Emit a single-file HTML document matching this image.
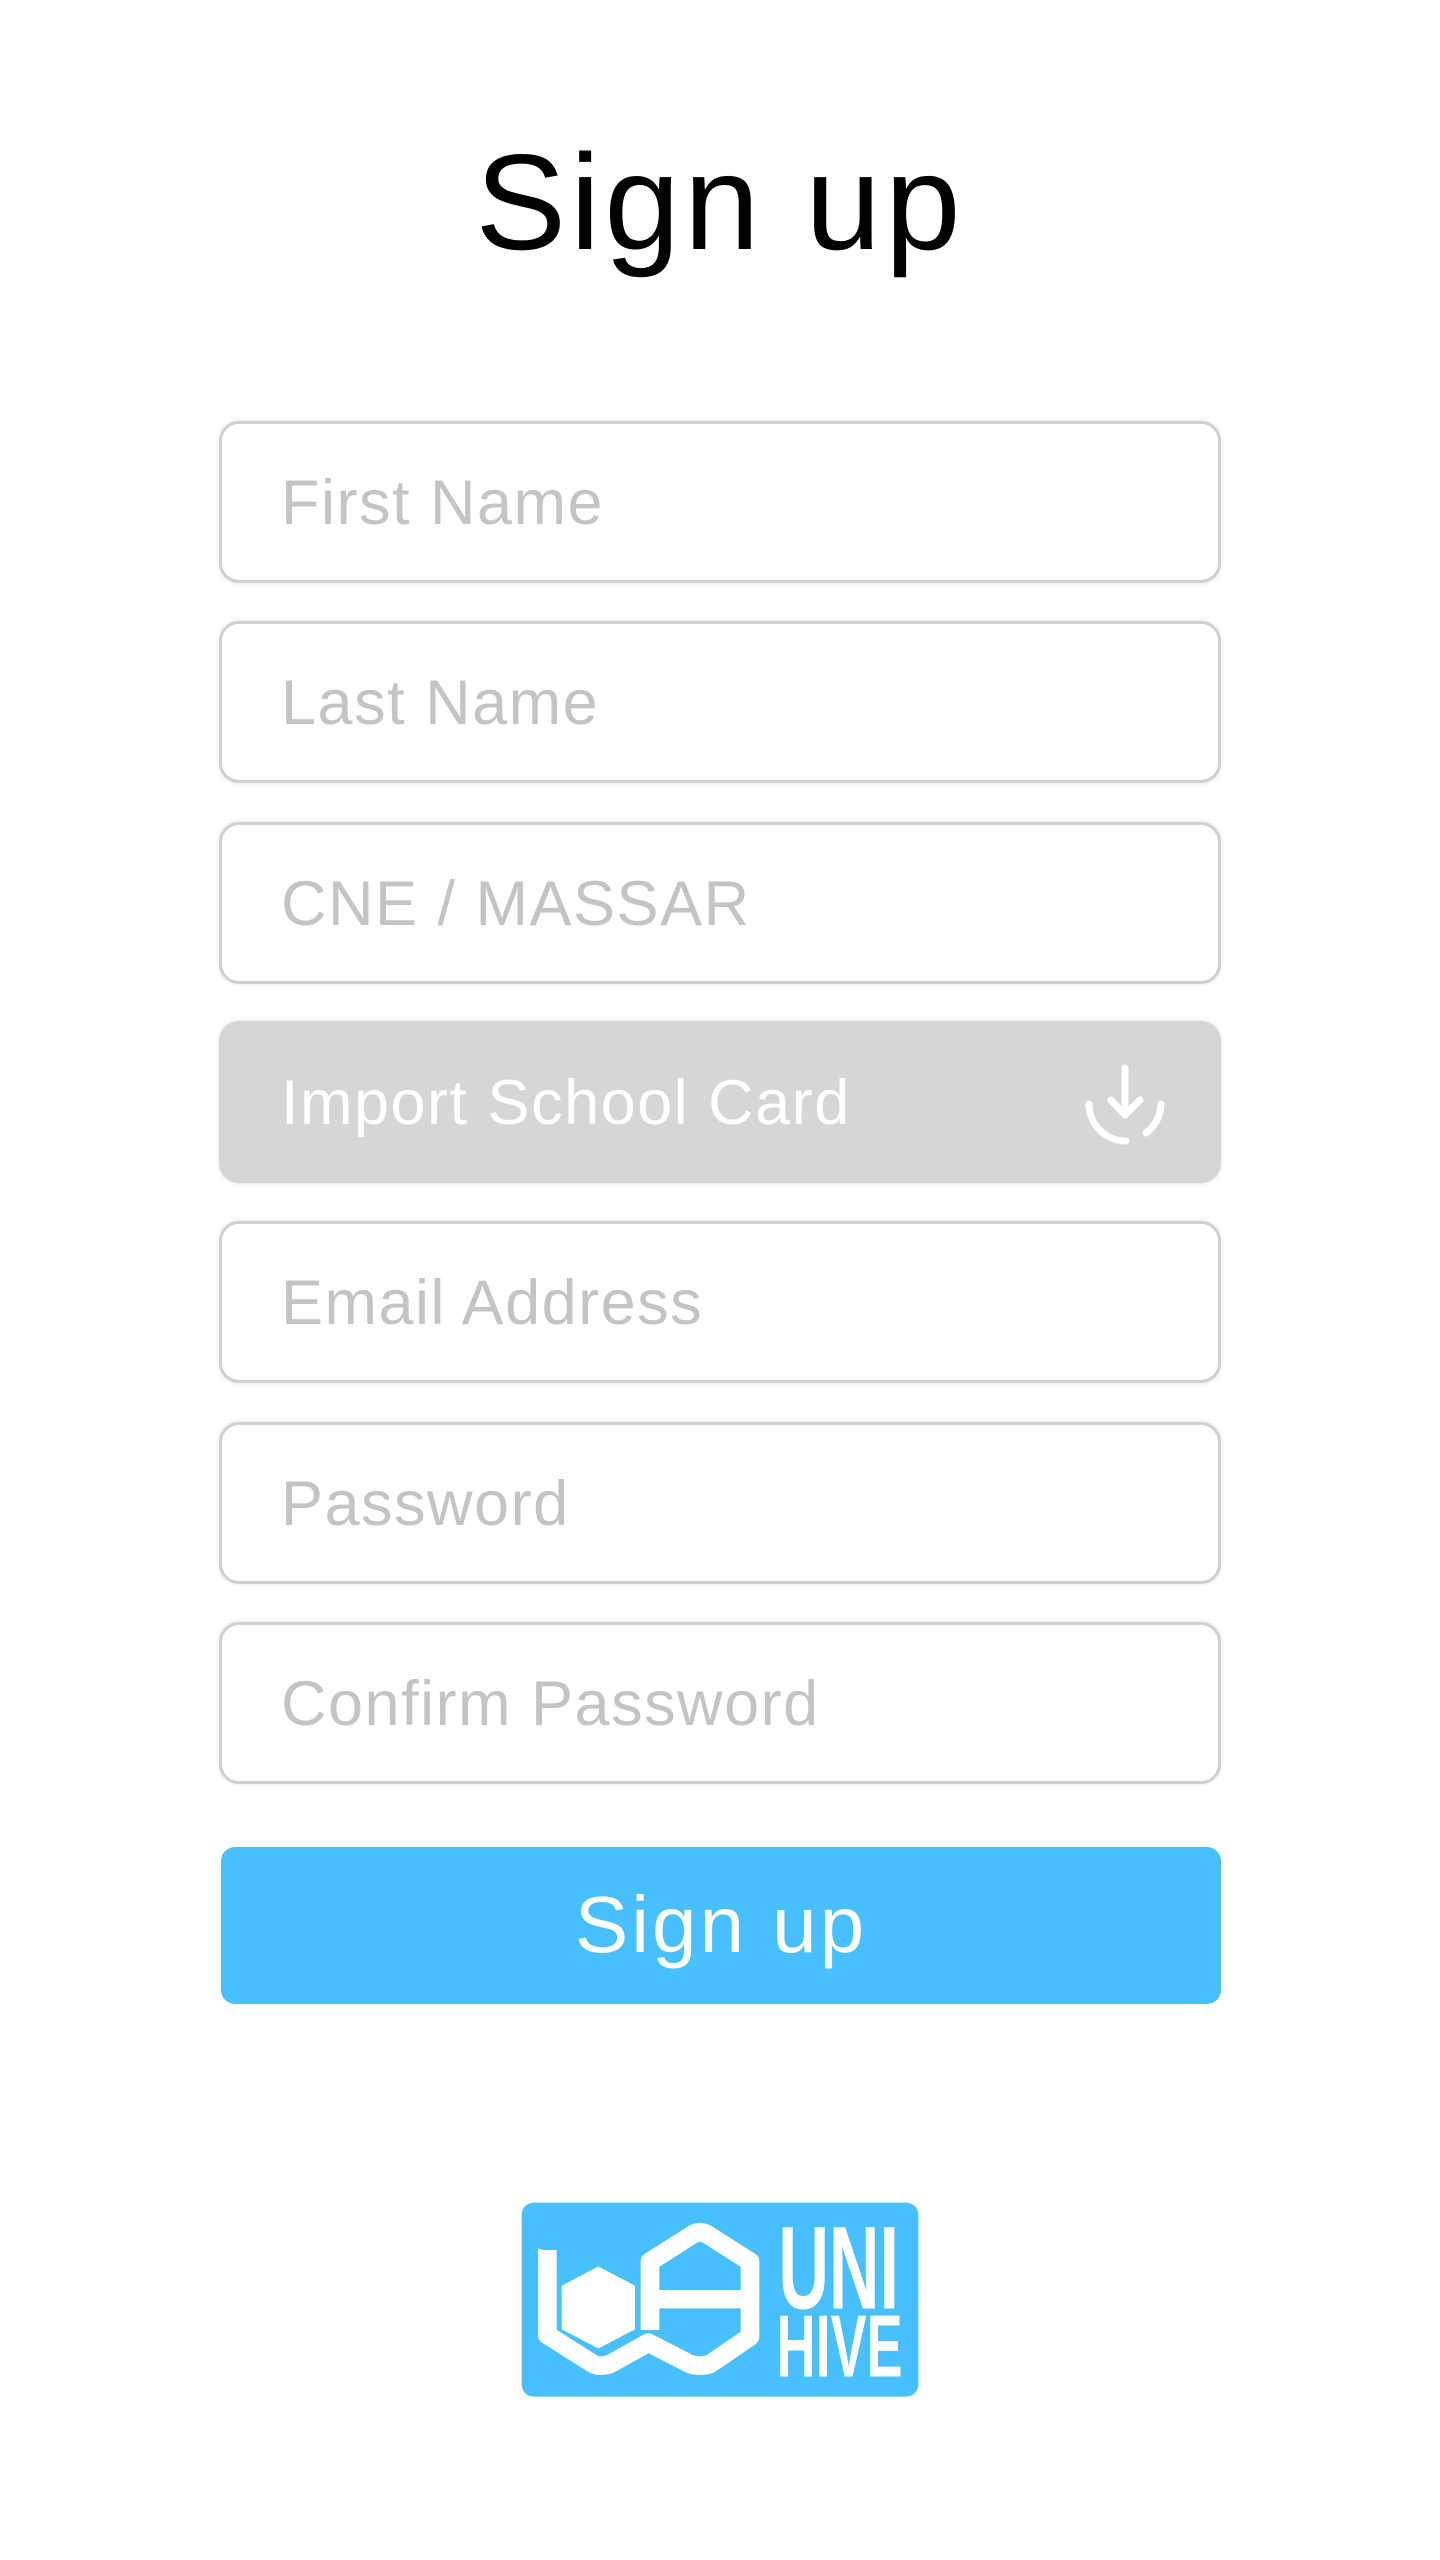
<!DOCTYPE html>
<html><head><meta charset="utf-8"><style>
html,body{margin:0;padding:0;background:#fff;}
body{width:1440px;height:2560px;position:relative;overflow:hidden;font-family:"Liberation Sans",sans-serif;}
h1{position:absolute;left:0;width:1440px;top:112px;margin:0;text-align:center;font-weight:400;font-size:136px;line-height:180px;color:#000;letter-spacing:4px;}
.f{position:absolute;left:219px;width:996px;height:156px;border:3px solid #d0d0d0;border-radius:20px;background:#fff;box-shadow:0 0 4px rgba(0,0,0,0.12);}
.f span{position:absolute;left:59px;top:1px;line-height:156px;font-size:63px;color:#c4c4c4;letter-spacing:1.5px;}
.imp{background:#d6d6d6;border-color:#d6d6d6;}
.imp span{color:#fff;}
.btn{position:absolute;left:221px;top:1847px;width:1000px;height:157px;background:#47c0fd;border-radius:14px;color:#fff;text-align:center;line-height:156px;font-size:80px;letter-spacing:3px;}
</style></head><body>
<h1>Sign up</h1>
<div class="f" style="top:421px"><span>First Name</span></div>
<div class="f" style="top:621px"><span>Last Name</span></div>
<div class="f" style="top:822px"><span>CNE / MASSAR</span></div>
<div class="f imp" style="top:1021px"><span>Import School Card</span>
<svg style="position:absolute;left:0;top:0" width="1002" height="162" viewBox="219 1021 1002 162">
<g fill="none" stroke="#fff" stroke-width="7" stroke-linecap="round" stroke-linejoin="round">
<path d="M1122 1065 V1112 M1108 1097 L1122 1112 L1137 1097"/>
<path d="M1086 1101 A37 37 0 0 0 1123 1138"/>
<path d="M1158 1101 A37 37 0 0 1 1143 1130"/>
</g></svg></div>
<div class="f" style="top:1221px"><span>Email Address</span></div>
<div class="f" style="top:1422px"><span>Password</span></div>
<div class="f" style="top:1622px"><span>Confirm Password</span></div>
<div class="btn">Sign up</div>
<svg style="position:absolute;left:510px;top:2190px" width="420" height="230" viewBox="0 0 1260 690">
<rect x="35" y="38" width="1190" height="582" rx="36" fill="#47c0fd"/>
<path d="M160 290 L265 235 L370 290 V415 L265 470 L160 415Z" fill="#fff" stroke="#fff" stroke-width="10" stroke-linejoin="round"/>
<path d="M112 180 V435 L250 522 Q270 532 300 522 L415 458 L540 522 Q570 532 600 522 L720 440 V215 L590 132 Q570 122 550 132 L420 215 V420" fill="none" stroke="#fff" stroke-width="56" stroke-linejoin="round"/>
<path d="M85 175 L140 197 L140 230 L85 230Z" fill="#fff"/>
<rect x="445" y="300" width="252" height="55" fill="#fff"/>
<text x="805" y="355" font-family="Liberation Sans" font-weight="700" font-size="354" fill="#fff" textLength="362" lengthAdjust="spacingAndGlyphs">UNI</text>
<text x="800" y="560" font-family="Liberation Sans" font-weight="700" font-size="264" fill="#fff" textLength="378" lengthAdjust="spacingAndGlyphs">HIVE</text>
</svg>
</body></html>
